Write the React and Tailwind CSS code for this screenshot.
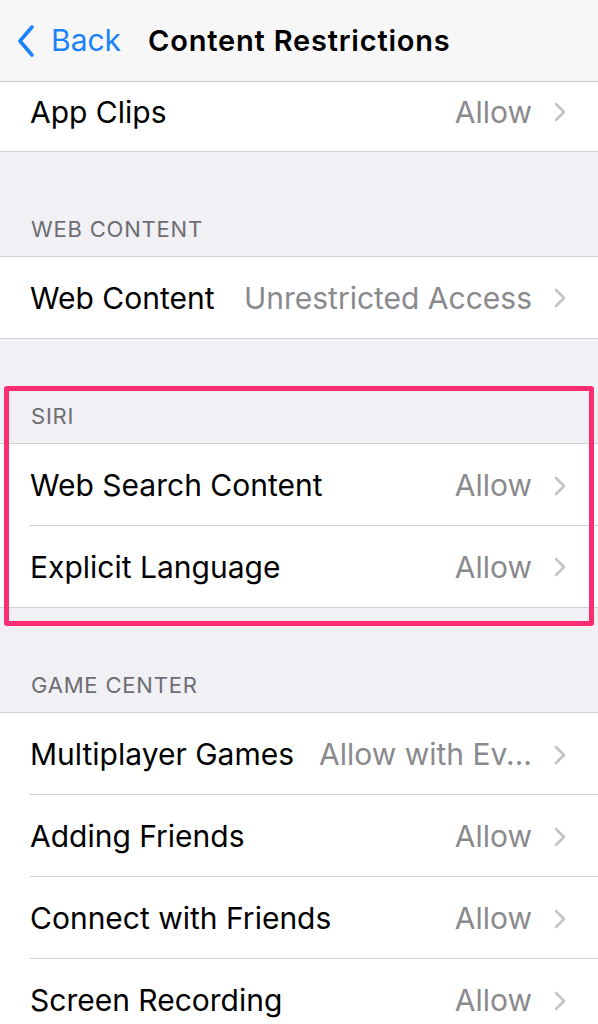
import React from 'react';

const font = { fontFamily: 'Inter, "Liberation Sans", sans-serif' };

const Chevron = () => (
  <svg className="w-[14px] h-[22px] ml-[21px] shrink-0" viewBox="0 0 14 22" fill="none">
    <path d="M3 3l8 8-8 8" stroke="#c4c4c7" strokeWidth="2.6" strokeLinecap="round" strokeLinejoin="round" />
  </svg>
);

const Row = ({ label, value, last, className = 'h-[82px]' }) => (
  <div className={`bg-white pl-[30px] ${className}`}>
    <div className={`h-full flex items-center pr-[31px] pt-[2px] border-b ${last ? 'border-transparent' : 'border-[#d1d1d5]'}`}>
      <span className="text-[30px] text-black whitespace-nowrap">{label}</span>
      <span className="ml-auto pl-6 text-[30px] text-[#8a8a8e] whitespace-nowrap truncate">{value}</span>
      <Chevron />
    </div>
  </div>
);

const Section = ({ title, children }) => (
  <div>
    <div className="h-[105px] flex items-end pl-[31px] pb-[10px] border-b border-[#d1d1d5]">
      <span className="text-[22px] text-[#6d6d72] tracking-[0.8px]">{title}</span>
    </div>
    <div className="bg-white border-b border-[#d1d1d5]">{children}</div>
  </div>
);

export default function App() {
  return (
    <div className="relative w-[598px] h-[1024px] overflow-hidden bg-[#f0f0f5]" style={font}>
      {/* Nav bar */}
      <div className="h-[82px] bg-[#f7f7f7] border-b border-[#c6c6c8] flex items-center pl-[16px]">
        <svg className="w-[20px] h-[34px]" viewBox="0 0 20 34" fill="none">
          <path d="M16 3L4 17l12 14" stroke="#1a82fb" strokeWidth="3.6" strokeLinecap="round" strokeLinejoin="round" />
        </svg>
        <span className="ml-[15px] text-[30px] text-[#1a82fb]">Back</span>
        <span className="ml-[27px] text-[29px] font-semibold text-black tracking-[0.8px]">Content Restrictions</span>
      </div>

      <div className="bg-white border-b border-[#d1d1d5]">
        <Row label="App Clips" value="Allow" last className="h-[69px] pb-[10px]" />
      </div>

      <Section title="WEB CONTENT">
        <Row label="Web Content" value="Unrestricted Access" last className="h-[81px]" />
      </Section>

      <Section title="SIRI">
        <Row label="Web Search Content" value="Allow" />
        <Row label="Explicit Language" value="Allow" last className="h-[81px]" />
      </Section>

      <Section title="GAME CENTER">
        <Row label="Multiplayer Games" value="Allow with Ev..." />
        <Row label="Adding Friends" value="Allow" />
        <Row label="Connect with Friends" value="Allow" />
        <Row label="Screen Recording" value="Allow" />
      </Section>

      {/* highlight annotation */}
      <div className="absolute left-[4px] top-[386px] w-[590px] h-[240px] border-[5px] border-[#fc2d70] rounded-[3px] pointer-events-none" />
    </div>
  );
}
